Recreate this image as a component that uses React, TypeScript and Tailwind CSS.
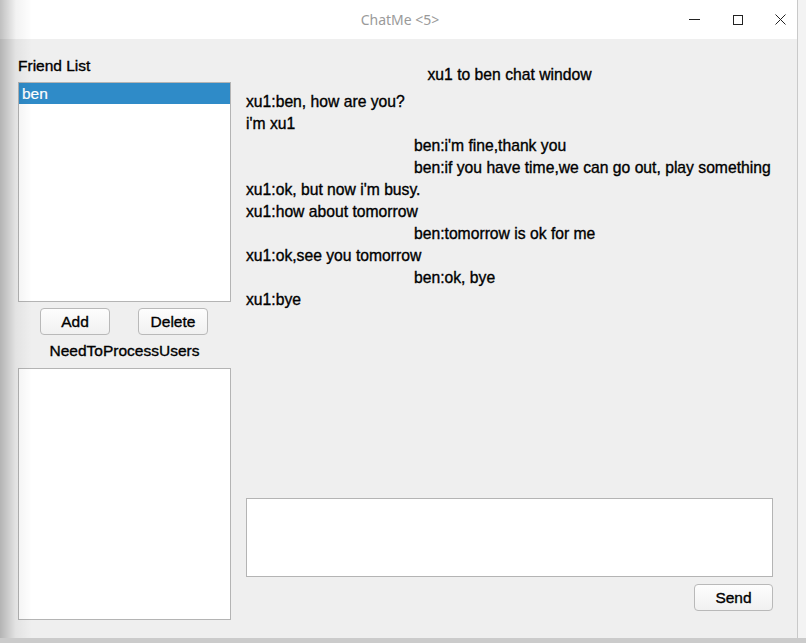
import React from 'react';

const messages: { from: 'me' | 'them'; text: string }[] = [
  { from: 'me', text: 'xu1:ben, how are you?' },
  { from: 'me', text: "i'm xu1" },
  { from: 'them', text: "ben:i'm fine,thank you" },
  { from: 'them', text: 'ben:if you have time,we can go out, play something' },
  { from: 'me', text: "xu1:ok, but now i'm busy." },
  { from: 'me', text: 'xu1:how about tomorrow' },
  { from: 'them', text: 'ben:tomorrow is ok for me' },
  { from: 'me', text: 'xu1:ok,see you tomorrow' },
  { from: 'them', text: 'ben:ok, bye' },
  { from: 'me', text: 'xu1:bye' },
];

const QtButton = ({ label, className }: { label: string; className: string }) => (
  <button
    type="button"
    className={`flex items-center justify-center rounded-[4px] border border-[#b9b9b9] bg-gradient-to-b from-[#fdfdfd] to-[#f1f1f1] text-[15.5px] leading-[18px] text-black ${className}`}
  >
    {label}
  </button>
);

const App = () => {
  return (
    <div className="relative h-[643px] w-[806px] overflow-hidden bg-[#d6d6d6] font-['Liberation_Sans',Arial,sans-serif] text-black [-webkit-text-stroke:0.35px_black]">
      <div className="flex h-[638px] w-[797px] flex-col bg-[#efefef]">
        {/* title bar */}
        <div className="flex h-[39px] shrink-0 items-center bg-white [-webkit-text-stroke:0px]">
          <div className="flex-1 pl-[128px] text-center font-['Noto_Sans',sans-serif] text-[14px] text-[#9a9a9a]">
            ChatMe &lt;5&gt;
          </div>
          <div className="flex items-center">
            <div className="flex h-[39px] w-[44px] items-center justify-center">
              <div className="h-px w-[11px] bg-[#222]" />
            </div>
            <div className="flex h-[39px] w-[43px] items-center justify-center">
              <div className="h-[10px] w-[10px] border border-[#222]" />
            </div>
            <div className="flex h-[39px] w-[38px] items-center justify-center pl-[4px]">
              <svg width="11" height="11" viewBox="0 0 11 11">
                <path d="M0.5 0.5 L10.5 10.5 M10.5 0.5 L0.5 10.5" stroke="#222" strokeWidth="1" />
              </svg>
            </div>
          </div>
        </div>

        {/* body */}
        <div className="flex flex-1 pl-[18px]">
          {/* left column */}
          <div className="flex w-[213px] flex-col">
            <div className="mt-[18px] h-[18px] whitespace-nowrap text-[15.5px] leading-[18px]">Friend List</div>
            <div className="mt-[7px] h-[220px] border border-[#b4b4b4] bg-white">
              <div className="flex h-[21px] items-center bg-[#2f8bc8] pl-[3px] text-[15.5px] text-white [-webkit-text-stroke:0.2px_white]">
                ben
              </div>
            </div>
            <div className="mt-[6px] flex">
              <QtButton label="Add" className="ml-[22px] h-[27px] w-[70px]" />
              <QtButton label="Delete" className="ml-[28px] h-[27px] w-[70px]" />
            </div>
            <div className="mt-[7px] h-[18px] whitespace-nowrap text-center text-[15.5px] leading-[18px]">NeedToProcessUsers</div>
            <div className="mt-[8px] h-[252px] border border-[#b4b4b4] bg-white" />
          </div>

          {/* chat column */}
          <div className="ml-[15px] flex w-[527px] flex-col">
            <div className="mt-[27px] h-[18px] whitespace-nowrap text-center text-[15.7px] leading-[18px]">xu1 to ben chat window</div>
            <div className="mt-[7px] h-[407px]">
              {messages.map((m, i) => (
                <div
                  key={i}
                  className={`h-[22px] whitespace-nowrap text-[15.7px] leading-[22px] ${m.from === 'them' ? 'pl-[168px]' : ''}`}
                >
                  {m.text}
                </div>
              ))}
            </div>
            <div className="h-[79px] border border-[#b4b4b4] bg-white" />
            <div className="mt-[7px] flex justify-end">
              <QtButton label="Send" className="h-[27px] w-[79px]" />
            </div>
          </div>
        </div>
      </div>

      {/* window edge shadow */}
      <div className="pointer-events-none absolute left-0 top-0 h-[638px] w-[32px] bg-gradient-to-r from-black/25 via-black/5 to-transparent" />
      {/* desktop strip on the right */}
      <div className="absolute right-0 top-0 h-[643px] w-[9px] border-l border-[#c9c9c9] bg-[#f3f3f3]" />
      <div className="absolute bottom-0 left-0 h-[5px] w-[806px] bg-[#cbcbcb]" />
    </div>
  );
};

export default App;
